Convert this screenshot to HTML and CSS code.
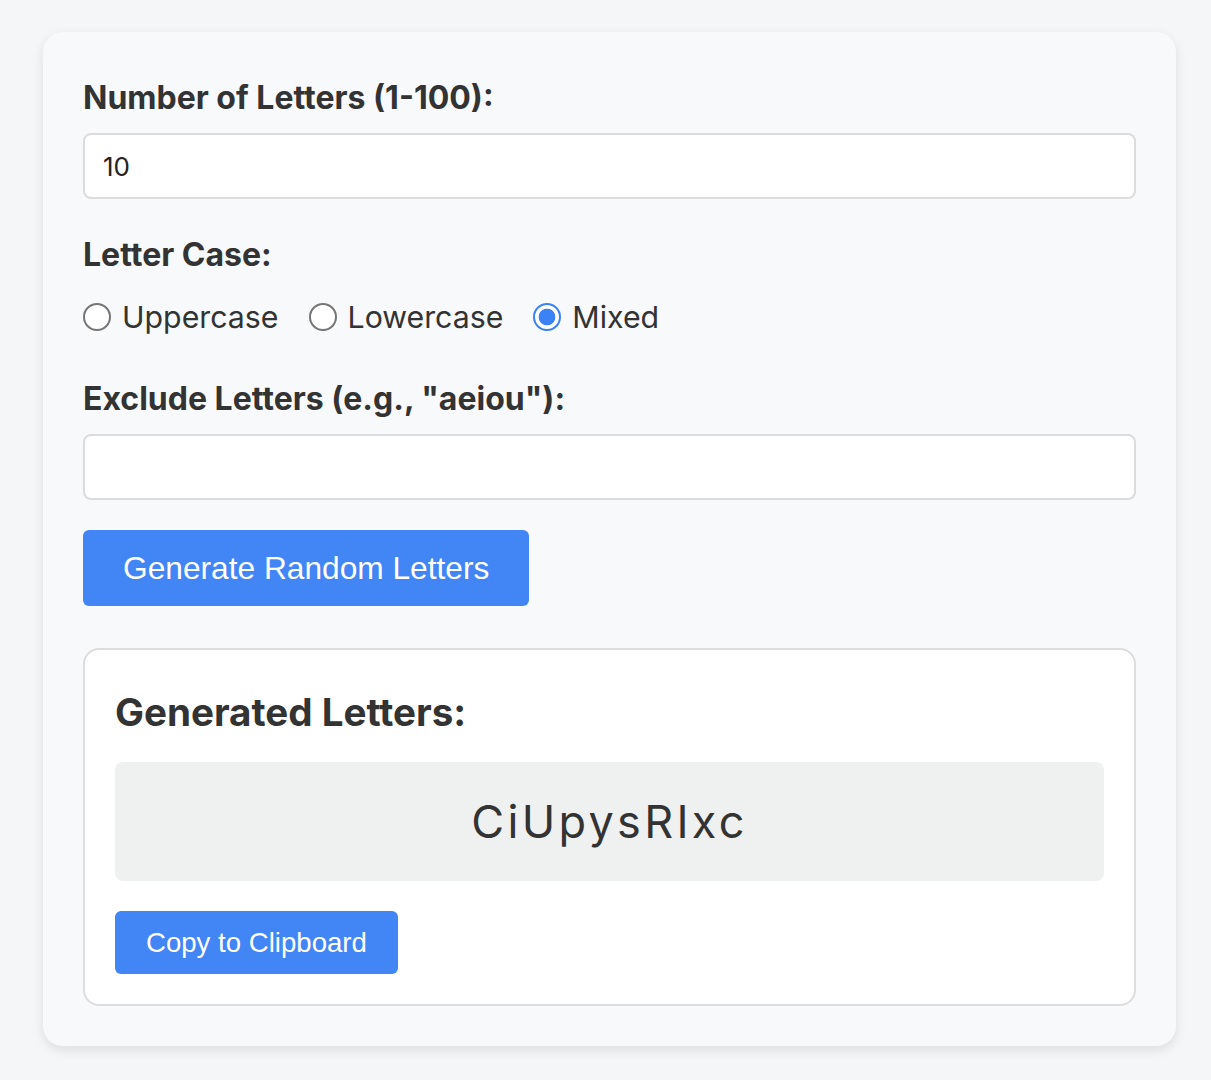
FILE: index.html
```html
<!DOCTYPE html>
<html lang="en">
<head>
<meta charset="utf-8">
<title>Random Letter Generator</title>
<link rel="stylesheet" href="styles.css">
</head>
<body>
<main class="card">
  <div class="field">
    <label class="label" for="count">Number of Letters (1-100):</label>
    <input class="text-input" id="count" type="text" value="10">
  </div>
  <div class="field">
    <span class="label">Letter Case:</span>
    <div class="radios">
      <label class="radio"><input type="radio" name="case"><span>Uppercase</span></label>
      <label class="radio"><input type="radio" name="case"><span>Lowercase</span></label>
      <label class="radio"><input type="radio" name="case" checked><span>Mixed</span></label>
    </div>
  </div>
  <div class="field">
    <label class="label" for="exclude">Exclude Letters (e.g., "aeiou"):</label>
    <input class="text-input" id="exclude" type="text">
  </div>
  <button class="btn btn-main" type="button">Generate Random Letters</button>
  <section class="result">
    <h2 class="result-title">Generated Letters:</h2>
    <div class="letters">CiUpysRIxc</div>
    <button class="btn btn-copy" type="button">Copy to Clipboard</button>
  </section>
</main>
</body>
</html>
```
FILE: styles.css
```css
* { box-sizing: border-box; }
html, body { margin: 0; }
body {
  background: #f5f6f8;
  font-family: Inter, "Liberation Sans", Arial, sans-serif;
  color: #333;
  padding: 32px 35px 34px 43px;
}
.card {
  width: 1133px;
  background: #f8f9fb;
  border-radius: 20px;
  box-shadow: 0 4px 12px rgba(0,0,0,0.10);
  padding: 40px 40px 40px 40px;
  display: flex;
  flex-direction: column;
}
.field {
  display: flex;
  flex-direction: column;
  margin-bottom: 30px;
}
.label {
  font-weight: 700;
  font-size: 32px;
  line-height: 36px;
  margin: 8px 0 17px;
  color: #333;
}
.text-input {
  height: 66px;
  width: 100%;
  border: 2px solid #dcdcdc;
  border-radius: 8px;
  background: #fff;
  font-family: inherit;
  font-size: 26px;
  padding: 0 18px;
  color: #222;
}
.radios {
  display: flex;
  gap: 30px;
  margin-top: 9px;
  margin-bottom: 8px;
}
.radio {
  display: flex;
  align-items: center;
  gap: 11px;
  font-size: 30.3px;
  line-height: 36px;
}
.radio input {
  appearance: none;
  -webkit-appearance: none;
  margin: 0;
  width: 28px;
  height: 28px;
  border: 2px solid #767676;
  border-radius: 50%;
  background: #fff;
}
.radio input:checked {
  border-color: #3b82f6;
  background: radial-gradient(circle, #3b82f6 0 8px, #fff 8.7px);
}
.btn {
  border: none;
  background: #4285f4;
  color: #fff;
  font-family: "Liberation Sans", Arial, sans-serif;
  align-self: flex-start;
  border-radius: 6px;
}
.btn-main {
  height: 76px;
  padding: 0 40px;
  font-size: 31.7px;
  margin-top: 0;
}
.result {
  margin-top: 42px;
  background: #fff;
  border: 2px solid #dddddd;
  border-radius: 16px;
  padding: 30px 30px 30px 30px;
  display: flex;
  flex-direction: column;
}
.result-title {
  margin: 10px 0 28px;
  font-size: 38.6px;
  line-height: 44px;
  font-weight: 700;
}
.letters {
  height: 119px;
  background: #eff0f0;
  border-radius: 8px;
  display: flex;
  align-items: center;
  justify-content: center;
  font-size: 45px;
  letter-spacing: 3.3px;
  color: #333;
}
.btn-copy {
  margin-top: 30px;
  height: 63px;
  padding: 0 31px;
  font-size: 27.6px;
}
```
